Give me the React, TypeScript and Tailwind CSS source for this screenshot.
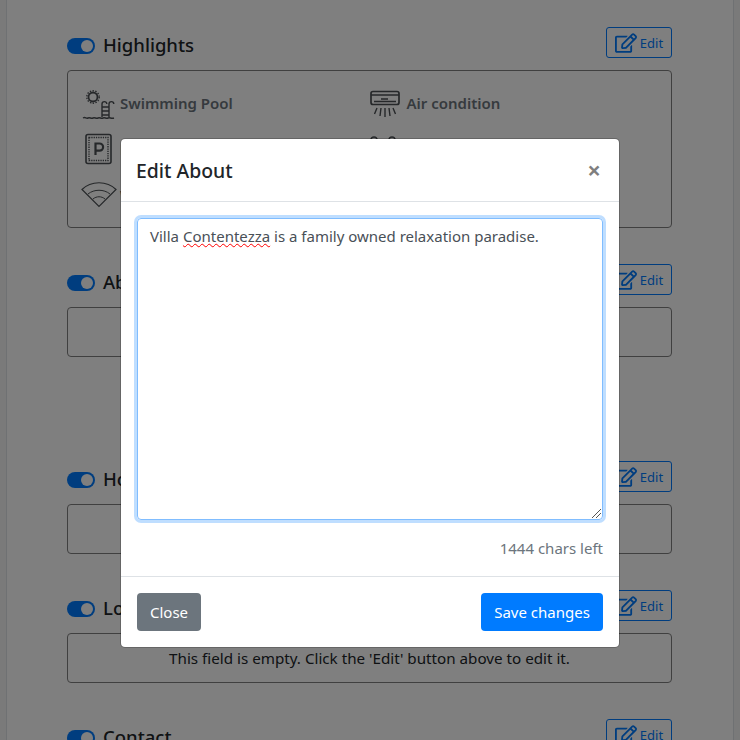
import { FaRegEdit } from "react-icons/fa";

function Toggle() {
  return (
    <span className="mt-[1px] flex h-4 w-7 items-center justify-end rounded-full bg-[#007bff] pr-[2px]">
      <span className="h-3 w-3 rounded-full bg-white" />
    </span>
  );
}

function Header({ title }: { title: string }) {
  return (
    <div className="mb-3 flex h-[31px] justify-between">
      <div className="flex items-center gap-2 pt-[5px]">
        <Toggle />
        <h3 className="text-[18.500px] leading-[26px] font-medium text-[#212529]">{title}</h3>
      </div>
      <button className="flex h-[31px] w-[66px] items-center justify-center gap-[3px] rounded-[3px] border border-[#007bff] text-[13px] text-[#007bff]">
        <FaRegEdit className="h-[20px] w-[22px]" />
        <span className="pt-[2px]">Edit</span>
      </button>
    </div>
  );
}

function EmptyBox() {
  return (
    <div className="flex h-[50px] items-center justify-center rounded border border-[#808080] text-[15.200px] text-[#212529]">
      This field is empty. Click the 'Edit' button above to edit it.
    </div>
  );
}

const stroke = { fill: "none", stroke: "#4c5054", strokeWidth: 1.4 };

function PoolIcon() {
  return (
    <svg width="34" height="34" viewBox="0 0 34 34" className="mt-[2px] -ml-[1px]" {...stroke}>
      <circle cx="11" cy="10" r="4.500" strokeWidth="1.800" />
      <circle cx="11" cy="10" r="6.200" strokeWidth="1.400" strokeDasharray="1.400 1.400" />
      <path d="M20 30V17a2.400 2.400 0 0 1 4.800 0M27 30V17a2.400 2.400 0 0 1 4.800 0M20 20h7M20 24h7M20 28h7" />
      <path d="M1 31c2.500-1.500 3 1 5 0s3 1 5 0 3 1 5 0 3 1 5 0 3 1 5 0 3 1 6 0" />
    </svg>
  );
}

function ParkingIcon() {
  return (
    <svg width="32" height="32" viewBox="0 0 32 32" {...stroke}>
      <rect x="3" y="1.500" width="25" height="29" rx="2" strokeWidth="1.600" />
      <rect x="6" y="4.500" width="19" height="23" strokeDasharray="1.300 1" />
      <path d="M12.500 22V10.500h4a3.600 3.600 0 0 1 0 7.200h-4" strokeWidth="2.200" />
    </svg>
  );
}

function WifiIcon() {
  return (
    <svg width="36" height="28" viewBox="0 0 36 28" className="-mt-[3px] -ml-[2px]" {...stroke}>
      <path d="M1 9.500C10 .5 26 .5 35 9.500L18 26.500Z" strokeWidth="1.200" />
      <path d="M7 14c6-5 16-5 22 0M12 19c3.500-3 8.500-3 12 0" strokeWidth="1" />
    </svg>
  );
}

function AcIcon() {
  return (
    <svg width="32" height="30" viewBox="0 0 32 30" className="mt-[4px]" {...stroke}>
      <rect x="1" y="1.500" width="28" height="13" rx="2" strokeWidth="1.700" />
      <path d="M1 5h28M4 11.500h22M11 9h7" />
      <path d="M7 18l-2.500 6M11 18l-1 8M15 18v9M19 18l1 8M23 18l2.500 6" />
    </svg>
  );
}

function PeopleIcon() {
  return (
    <svg width="30" height="30" viewBox="0 0 30 30" className="mt-[4px]" {...stroke}>
      <circle cx="4" cy="4" r="3" />
      <circle cx="22" cy="4" r="3" />
      <path d="M0 26V12a4 4 0 0 1 8 0v14M18 26V12a4 4 0 0 1 8 0v14" />
    </svg>
  );
}

function Highlight({ icon, label }: { icon: React.ReactNode; label: string }) {
  return (
    <div className="flex h-[46px] items-center">
      <span className="flex w-[37px] shrink-0 items-center">{icon}</span>
      <span className="text-[15px] font-semibold text-[#6c757d]">{label}</span>
    </div>
  );
}

export default function App() {
  return (
    <div className="relative h-[740px] w-[740px] overflow-hidden bg-[#f4f4f4] font-['Noto_Sans',sans-serif]">
      <main className="mx-[6px] h-full border-x border-[#dee2e6] bg-white pt-[27px] pr-[61px] pl-[60px]">
        <section>
          <Header title="Highlights" />
          <div className="grid h-[158px] grid-cols-2 content-start rounded border border-[#808080] px-[15px] pt-[9px]">
            <Highlight icon={<PoolIcon />} label="Swimming Pool" />
            <Highlight icon={<AcIcon />} label="Air condition" />
            <Highlight icon={<ParkingIcon />} label="Parking" />
            <Highlight icon={<PeopleIcon />} label="Family friendly" />
            <Highlight icon={<WifiIcon />} label="Wifi" />
          </div>
        </section>
        <section className="mt-9">
          <Header title="About" />
          <div className="h-[50px] rounded border border-[#808080]" />
        </section>
        <section className="mt-[104px]">
          <Header title="House Rules" />
          <div className="h-[50px] rounded border border-[#808080]" />
        </section>
        <section className="mt-9">
          <Header title="Location" />
          <EmptyBox />
        </section>
        <section className="mt-9">
          <Header title="Contact" />
        </section>
      </main>

      <div className="absolute inset-0 bg-black/50" />

      <div className="absolute top-[138px] left-[120px] w-[500px] rounded-[5px] border border-black/20 bg-white bg-clip-padding">
        <div className="flex h-[63px] items-center justify-between border-b border-[#dee2e6] pt-[1px] pr-[18px] pl-[15px]">
          <h5 className="text-[19.400px] font-medium text-[#212529]">Edit About</h5>
          <span className="pb-[2px] text-[24px] leading-none font-bold text-black/50">×</span>
        </div>
        <div className="px-4 pt-4">
          <div className="relative h-[302px] rounded border border-[#80bdff] px-3 py-[5px] text-[15px] leading-6 text-[#495057] shadow-[0_0_0_3px_rgba(0,123,255,0.25)]">
            Villa{" "}
            <span className="underline decoration-[#ff0000] decoration-wavy decoration-1 underline-offset-1">
              Contentezza
            </span>{" "}
            is a family owned relaxation paradise.
            <svg className="absolute right-0 bottom-0" width="12" height="12" viewBox="0 0 12 12" fill="none" stroke="#555" strokeWidth="1">
              <path d="M2 11L11 2M6 11l5-5" />
            </svg>
          </div>
          <p className="mt-4 h-[40px] text-right text-[15px] leading-6 text-[#6c757d]">1444 chars left</p>
        </div>
        <div className="flex h-[71px] items-center justify-between border-t border-[#dee2e6] px-4">
          <button className="h-[38px] w-16 rounded bg-[#6c757d] text-[15px] text-white">Close</button>
          <button className="h-[38px] w-[122px] rounded bg-[#007bff] text-[15px] text-white">Save changes</button>
        </div>
      </div>
    </div>
  );
}
